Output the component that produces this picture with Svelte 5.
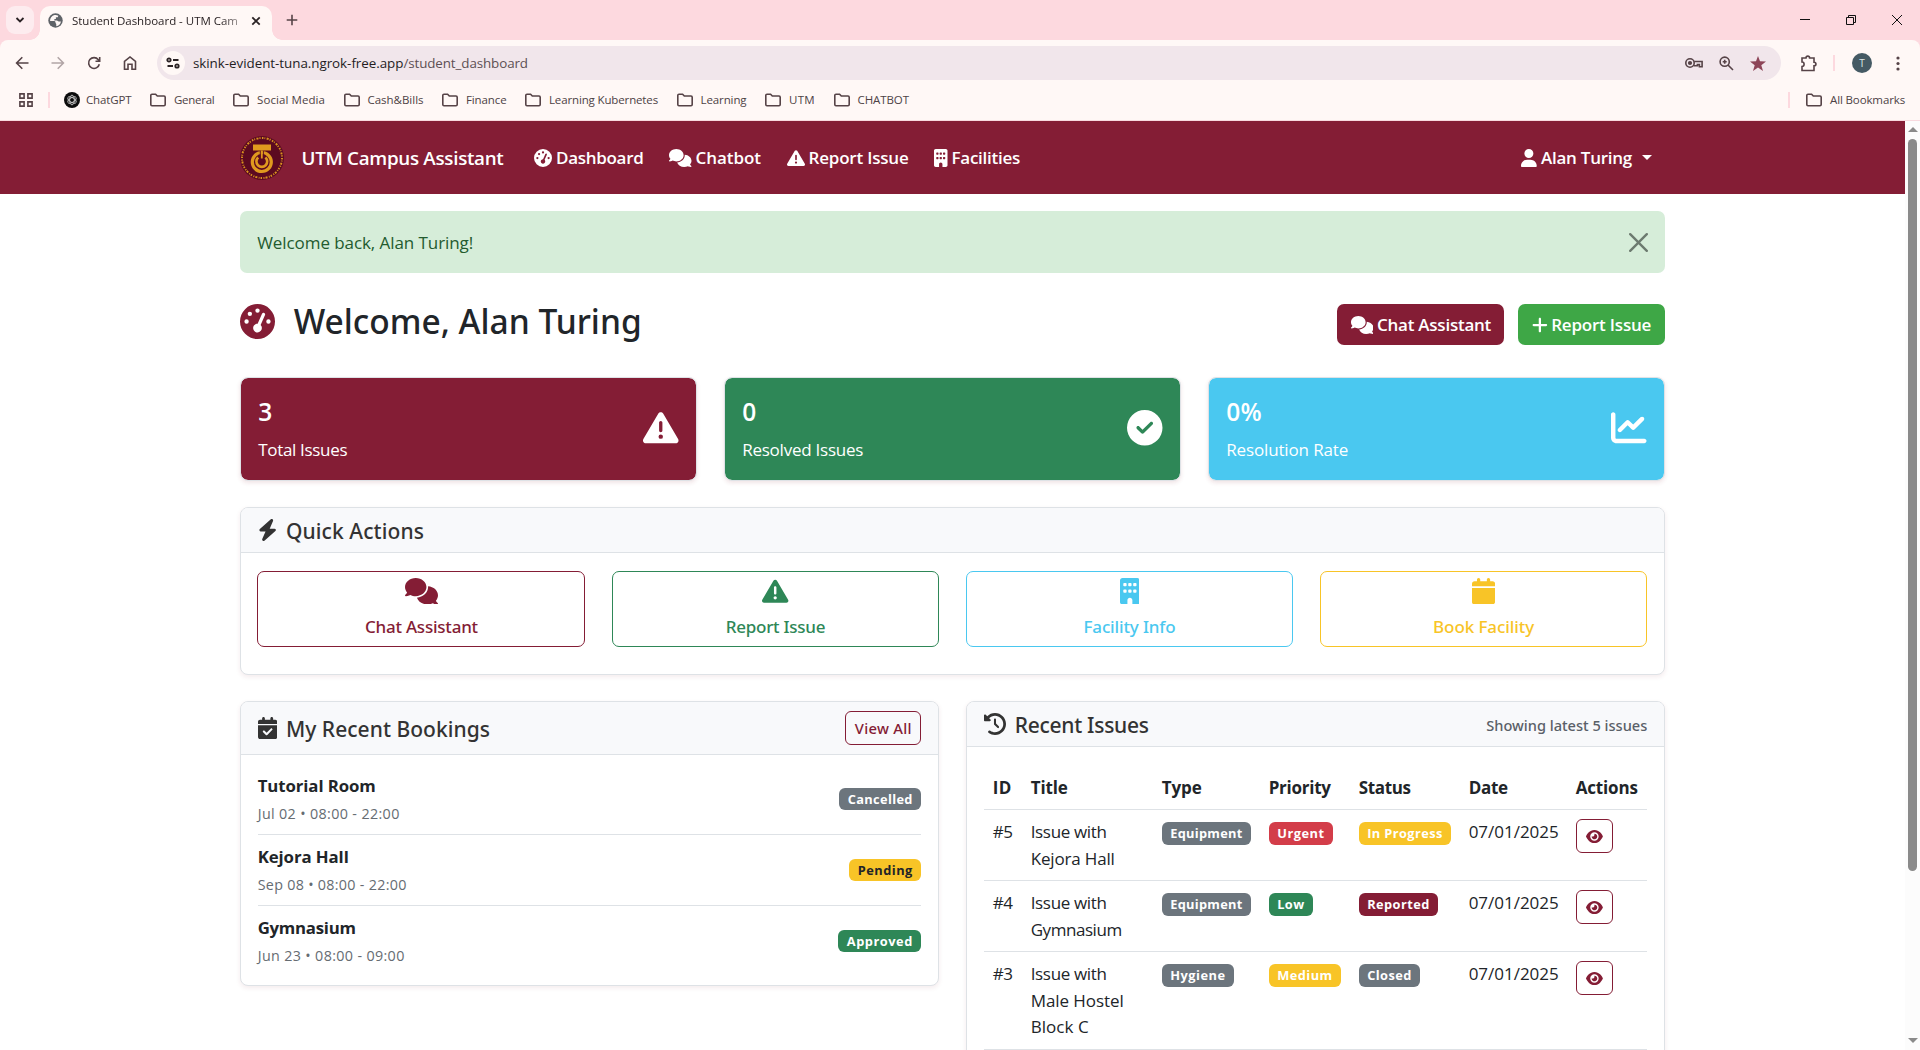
<script>
  const icons = {
    comments: [640, 'M208 352c114.9 0 208-78.8 208-176S322.9 0 208 0S0 78.8 0 176c0 38.6 14.7 74.3 39.6 103.4c-3.5 9.4-8.7 17.7-14.2 24.7c-4.8 6.2-9.7 11-13.3 14.3c-1.8 1.6-3.3 2.9-4.3 3.7c-.5 .4-.9 .7-1.1 .8l-.2 .2C1 327.2-1.4 334.4 .8 340.9S9.1 352 16 352c21.8 0 43.8-5.6 62.1-12.5c9.2-3.5 17.8-7.4 25.2-11.4C134.1 343.3 169.8 352 208 352zM448 176c0 112.3-99.1 196.9-216.5 207C255.8 457.4 336.4 512 432 512c38.2 0 73.9-8.7 104.7-23.9c7.5 4 16 7.9 25.2 11.4c18.3 6.9 40.3 12.5 62.1 12.5c6.9 0 13.1-4.5 15.2-11.1c2.1-6.6-.2-13.8-5.8-17.9l-.2-.2c-.2-.2-.6-.4-1.1-.8c-1-.8-2.5-2-4.3-3.7c-3.6-3.3-8.5-8.1-13.3-14.3c-5.5-7-10.7-15.4-14.2-24.7c24.9-29 39.6-64.7 39.6-103.4c0-92.8-84.9-168.9-192.6-175.5c.4 5.1 .6 10.3 .6 15.5z'],
    warning: [512, 'M256 32c14.2 0 27.3 7.5 34.5 19.8l216 368c7.3 12.4 7.3 27.7 .2 40.1S486.3 480 472 480H40c-14.3 0-27.6-7.7-34.7-20.1s-7-27.8 .2-40.1l216-368C228.7 39.5 241.8 32 256 32zm0 128c-13.3 0-24 10.7-24 24V296c0 13.3 10.7 24 24 24s24-10.7 24-24V184c0-13.3-10.7-24-24-24zm32 224a32 32 0 1 0 -64 0 32 32 0 1 0 64 0z'],
    gauge: [512, 'M0 256a256 256 0 1 1 512 0A256 256 0 1 1 0 256zM288 96a32 32 0 1 0 -64 0 32 32 0 1 0 64 0zM256 416c35.3 0 64-28.7 64-64c0-17.4-6.9-33.1-18.1-44.6L366 161.7c5.3-12.1-.2-26.3-12.3-31.6s-26.3 .2-31.6 12.3L257.9 288c-.6 0-1.3 0-1.9 0c-35.3 0-64 28.7-64 64s28.7 64 64 64zM176 144a32 32 0 1 0 -64 0 32 32 0 1 0 64 0zM96 288a32 32 0 1 0 0-64 32 32 0 1 0 0 64zm352-32a32 32 0 1 0 -64 0 32 32 0 1 0 64 0z'],
    building: [384, 'M48 0C21.5 0 0 21.5 0 48V464c0 26.5 21.5 48 48 48h96V432c0-26.5 21.5-48 48-48s48 21.5 48 48v80h96c26.5 0 48-21.5 48-48V48c0-26.5-21.5-48-48-48H48zM64 240c0-8.8 7.2-16 16-16h32c8.8 0 16 7.2 16 16v32c0 8.8-7.2 16-16 16H80c-8.8 0-16-7.2-16-16V240zm112-16h32c8.8 0 16 7.2 16 16v32c0 8.8-7.2 16-16 16H176c-8.8 0-16-7.2-16-16V240c0-8.8 7.2-16 16-16zm80 16c0-8.8 7.2-16 16-16h32c8.8 0 16 7.2 16 16v32c0 8.8-7.2 16-16 16H272c-8.8 0-16-7.2-16-16V240zM80 96h32c8.8 0 16 7.2 16 16v32c0 8.8-7.2 16-16 16H80c-8.8 0-16-7.2-16-16V112c0-8.8 7.2-16 16-16zm80 16c0-8.8 7.2-16 16-16h32c8.8 0 16 7.2 16 16v32c0 8.8-7.2 16-16 16H176c-8.8 0-16-7.2-16-16V112zM272 96h32c8.8 0 16 7.2 16 16v32c0 8.8-7.2 16-16 16H272c-8.8 0-16-7.2-16-16V112c0-8.8 7.2-16 16-16z'],
    user: [448, 'M224 256A128 128 0 1 0 224 0a128 128 0 1 0 0 256zm-45.7 48C79.8 304 0 383.8 0 482.3C0 498.7 13.3 512 29.7 512H418.3c16.4 0 29.7-13.3 29.7-29.7C448 383.8 368.2 304 269.7 304H178.3z'],
    plus: [448, 'M256 80c0-17.7-14.3-32-32-32s-32 14.3-32 32V224H48c-17.7 0-32 14.3-32 32s14.3 32 32 32H192V432c0 17.7 14.3 32 32 32s32-14.3 32-32V288H400c17.7 0 32-14.3 32-32s-14.3-32-32-32H256V80z'],
    check: [512, 'M256 512A256 256 0 1 0 256 0a256 256 0 1 0 0 512zM369 209L241 337c-9.4 9.4-24.6 9.4-33.9 0l-64-64c-9.4-9.4-9.4-24.6 0-33.9s24.6-9.4 33.9 0l47 47L335 175c9.4-9.4 24.6-9.4 33.9 0s9.4 24.6 0 33.9z'],
    chart: [512, 'M64 64c0-17.7-14.3-32-32-32S0 46.3 0 64V400c0 44.2 35.8 80 80 80H480c17.7 0 32-14.3 32-32s-14.3-32-32-32H80c-8.8 0-16-7.2-16-16V64zm406.6 86.6c12.5-12.5 12.5-32.8 0-45.3s-32.8-12.5-45.3 0L320 210.7l-57.4-57.4c-12.5-12.5-32.8-12.5-45.3 0l-112 112c-12.5 12.5-12.5 32.8 0 45.3s32.8 12.5 45.3 0L240 221.3l57.4 57.4c12.5 12.5 32.8 12.5 45.3 0l128-128z'],
    bolt: [448, 'M349.4 44.6c5.9-13.7 1.5-29.7-10.6-38.5s-28.6-8-39.9 1.8l-256 224c-10 8.8-13.6 22.9-8.9 35.3S50.7 288 64 288H175.5L98.6 467.4c-5.9 13.7-1.5 29.7 10.6 38.5s28.6 8 39.9-1.8l256-224c10-8.8 13.6-22.9 8.9-35.3s-16.6-20.7-30-20.7H272.5L349.4 44.6z'],
    calendar: [448, 'M96 32V64H48C21.5 64 0 85.5 0 112v48H448V112c0-26.5-21.5-48-48-48H352V32c0-17.7-14.3-32-32-32s-32 14.3-32 32V64H160V32c0-17.7-14.3-32-32-32S96 14.3 96 32zM448 192H0V464c0 26.5 21.5 48 48 48H400c26.5 0 48-21.5 48-48V192z'],
    calendarCheck: [448, 'M128 0c17.7 0 32 14.3 32 32V64H288V32c0-17.7 14.3-32 32-32s32 14.3 32 32V64h48c26.5 0 48 21.5 48 48v48H0V112C0 85.5 21.5 64 48 64H96V32c0-17.7 14.3-32 32-32zM0 192H448V464c0 26.5-21.5 48-48 48H48c-26.5 0-48-21.5-48-48V192zM329 305c9.4-9.4 9.4-24.6 0-33.9s-24.6-9.4-33.9 0l-95 95-47-47c-9.4-9.4-24.6-9.4-33.9 0s-9.4 24.6 0 33.9l64 64c9.4 9.4 24.6 9.4 33.9 0L329 305z'],
    history: [512, 'M75 75L41 41C25.9 25.9 0 36.6 0 57.9V168c0 13.3 10.7 24 24 24H134.1c21.4 0 32.1-25.9 17-41l-30.8-30.8C155 85.5 203 64 256 64c106 0 192 86 192 192s-86 192-192 192c-40.8 0-78.6-12.7-109.7-34.4c-14.5-10.1-34.4-6.6-44.6 7.9s-6.6 34.4 7.9 44.6C151.2 495 201.7 512 256 512c141.4 0 256-114.6 256-256S397.4 0 256 0C185.3 0 121.3 28.7 75 75zm181 53c-13.3 0-24 10.7-24 24V256c0 6.4 2.5 12.5 7 17l72 72c9.4 9.4 24.6 9.4 33.9 0s9.4-24.6 0-33.9l-65-65V152c0-13.3-10.7-24-24-24z'],
    eye: [576, 'M288 32c-80.8 0-145.5 36.8-192.6 80.6C48.6 156 17.3 208 2.5 243.7c-3.3 7.9-3.3 16.7 0 24.6C17.3 304 48.6 356 95.4 399.4C142.5 443.2 207.2 480 288 480s145.5-36.8 192.6-80.6c46.8-43.5 78.1-95.4 93-131.1c3.3-7.9 3.3-16.7 0-24.6c-14.9-35.7-46.2-87.7-93-131.1C433.5 68.8 368.8 32 288 32zM144 256a144 144 0 1 1 288 0 144 144 0 1 1 -288 0zm144-64c0 35.3-28.7 64-64 64c-7.1 0-13.9-1.2-20.3-3.3c-5.5-1.8-11.9 1.6-11.7 7.4c.3 6.9 1.3 13.8 3.2 20.7c13.7 51.2 66.4 81.6 117.6 67.9s81.6-66.4 67.9-117.6c-11.1-41.5-47.8-69.4-88.6-71.1c-5.8-.2-9.2 6.1-7.4 11.7c2.1 6.4 3.3 13.2 3.3 20.3z'],
  };

  const bookmarks = [
    ['General', 40.5], ['Social Media', 68], ['Cash&Bills', 56], ['Finance', 40.5],
    ['Learning Kubernetes', 109], ['Learning', 46], ['UTM', 26], ['CHATBOT', 51.5],
  ];
  const nav = [
    ['gauge', 'Dashboard', 87.5], ['comments', 'Chatbot', 65.5],
    ['warning', 'Report Issue', 100], ['building', 'Facilities', 68.5],
  ];
  const stats = [
    { value: '3', vw: 14, label: 'Total Issues', w: 89, icon: 'warning', tone: 'maroon' },
    { value: '0', vw: 14, label: 'Resolved Issues', w: 121, icon: 'check', tone: 'green' },
    { value: '0%', vw: 36, label: 'Resolution Rate', w: 122, icon: 'chart', tone: 'sky' },
  ];
  const actions = [
    { icon: 'comments', label: 'Chat Assistant', w: 113, tone: 'maroon' },
    { icon: 'warning', label: 'Report Issue', w: 99.5, tone: 'green' },
    { icon: 'building', label: 'Facility Info', w: 92, tone: 'sky' },
    { icon: 'calendar', label: 'Book Facility', w: 101, tone: 'amber' },
  ];
  const bookings = [
    { name: 'Tutorial Room', w: 118, when: 'Jul 02 • 08:00 - 22:00', ww: 142, status: 'Cancelled', sw: 65, tone: 'gray' },
    { name: 'Kejora Hall', w: 91, when: 'Sep 08 • 08:00 - 22:00', ww: 149, status: 'Pending', sw: 55, tone: 'amber dark' },
    { name: 'Gymnasium', w: 98, when: 'Jun 23 • 08:00 - 09:00', ww: 147, status: 'Approved', sw: 66, tone: 'green' },
  ];
  const columns = [['ID', 19], ['Title', 37], ['Type', 40], ['Priority', 62], ['Status', 52], ['Date', 39], ['Actions', 62]];
  const issues = [
    { id: '#5', title: [['Issue with', 76], ['Kejora Hall', 84]], type: ['Equipment', 72.5], priority: ['Urgent', 47.5, 'red'], status: ['In Progress', 75.5, 'amber'] },
    { id: '#4', title: [['Issue with', 76], ['Gymnasium', 91]], type: ['Equipment', 72.5], priority: ['Low', 27.5, 'green'], status: ['Reported', 62.5, 'maroon'] },
    { id: '#3', title: [['Issue with', 76], ['Male Hostel', 93], ['Block C', 58]], type: ['Hygiene', 55.5], priority: ['Medium', 55.5, 'amber'], status: ['Closed', 44.5, 'gray'] },
  ];

  // Tracks a label so that it fills the given width in pixels.
  function fit(node, width) {
    const natural = node.getBoundingClientRect().width;
    const n = node.textContent.length;
    node.style.letterSpacing = `${((width - natural) / n).toFixed(3)}px`;
  }
</script>

{#snippet icon(name, size)}
  <svg class="icon" viewBox="0 0 {icons[name][0]} 512" width={(icons[name][0] / 512) * size} height={size}>
    <path d={icons[name][1]} />
  </svg>
{/snippet}

{#snippet folder()}
  <svg class="line" width="16" height="14" viewBox="0 0 16 14">
    <path d="M.8 2.2Q.8 1.200 2 1.200h3.600l1.700 1.800H14q1.200 0 1.200 1.200v7.300q0 1.200-1.200 1.200H2Q.8 12.700 .8 11.500z" />
  </svg>
{/snippet}

{#snippet badge(label, width, tone)}
  <span class="badge {tone}"><span class="t" use:fit={width}>{label}</span></span>
{/snippet}

<div class="window">
  <header class="chrome">
    <div class="tabs">
      <span class="tab-search"><svg class="line dk" width="10" height="8" viewBox="0 0 10 8"><path d="M1.5 2L5 5.5 8.5 2" /></svg></span>
      <div class="tab">
        <svg width="15" height="15" viewBox="0 0 16 16"><circle cx="8" cy="8" r="7.7" fill="#5f6368" /><path d="M7 2.2C4 3 2 5.5 2.2 8.500h4c1.200 0 1.800.6 1.800 1.600s.8 1 .8 2V14c2.600-.3 4.700-2.400 5-5h-2.300c-1 0-1.200-.8-2-1H6.800V6.300h1.600V4.600h2L11 3C9.600 2.100 8.300 2 7 2.200z" fill="#fff8f6" /></svg>
        <span class="tab-title"><span class="t" use:fit={166}>Student Dashboard - UTM Cam</span></span>
        <svg class="line dk" width="10" height="10" viewBox="0 0 10 10"><path d="M1.3 1.3l7.4 7.4M8.7 1.3L1.3 8.7" /></svg>
      </div>
      <svg class="line plus" width="12" height="12" viewBox="0 0 12 12"><path d="M6 .7v10.600M.7 6h10.600" /></svg>
      <div class="controls">
        <svg width="10" height="10" viewBox="0 0 10 10"><path d="M0 4.500h10" /></svg>
        <svg width="10" height="10" viewBox="0 0 10 10"><path d="M.5 2.500h7v7h-7zM2.500 2.500v-2h7v7h-2" /></svg>
        <svg width="10" height="10" viewBox="0 0 10 10"><path d="M0 0l10 10M10 0L0 10" /></svg>
      </div>
    </div>

    <div class="toolbar-wrap">
      <div class="toolbar">
        <div class="nav-buttons">
          <svg class="line" width="14" height="14" viewBox="0 0 14 14"><path d="M13.500 7H2M7.300 1.300L1.600 7l5.700 5.700" /></svg>
          <svg class="line faded" width="14" height="14" viewBox="0 0 14 14"><path d="M.5 7H12M6.700 1.300L12.400 7l-5.700 5.700" /></svg>
          <svg class="line" width="14" height="14" viewBox="0 0 14 14"><path d="M12.300 8.200A5.400 5.400 0 1 1 11.300 3.700L12.500 5M12.700 1v4.200H8.500" /></svg>
          <svg class="line" width="14" height="14" viewBox="0 0 14 14"><path d="M1.500 5.400L7 1l5.500 4.400v7.800H9V8.300H5v4.900H1.500z" /></svg>
        </div>
        <div class="omnibox">
          <span class="site"><svg class="line dk" width="14" height="12" viewBox="0 0 14 12"><circle cx="3" cy="3" r="1.7" /><path d="M7 3h5.500M1.500 9H7" /><circle cx="11" cy="9" r="1.7" /></svg></span>
          <span class="url"><span class="t host" use:fit={210.5}>skink-evident-tuna.ngrok-free.app</span><span class="t" use:fit={124.5}>/student_dashboard</span></span>
          <svg class="line" width="18" height="12" viewBox="0 0 18 12"><circle cx="5" cy="6" r="4.2" /><circle cx="5" cy="6" r="1.3" fill="#564347" /><path d="M9.200 4.500h7.900v5.300h-2.700V7.600h-2v1.200H9" /></svg>
          <svg class="line zoomer" width="15" height="15" viewBox="0 0 15 15"><circle cx="5.7" cy="5.7" r="4.6" /><path d="M9 9l5 5M5.700 3.700v4M3.700 5.700h4" /></svg>
          <svg class="star" width="16" height="15" viewBox="0 0 16 15"><path d="M8 0l2 5.300 6 .2-4.700 3.700L13 15l-5-3.400L3 15l1.700-5.800L0 5.500l6-.2z" /></svg>
        </div>
        <svg class="line puzzle" width="17" height="17" viewBox="0 0 17 17"><path d="M2 3h4c0-2.500 3.600-2.500 3.600 0H14v4.200c2.600 0 2.600 3.700 0 3.700V15.500H2v-4c2.800 0 2.800-4.500 0-4.500z" /></svg>
        <span class="rule"></span>
        <span class="avatar">T</span>
        <svg class="dots" width="4" height="15" viewBox="0 0 4 15"><circle cx="2" cy="2" r="1.6" /><circle cx="2" cy="7.5" r="1.6" /><circle cx="2" cy="13" r="1.6" /></svg>
      </div>
    </div>

    <div class="bookmarks">
      <svg class="line apps" width="14" height="14" viewBox="0 0 14 14"><path d="M.9 .9h4.200v4.200H.9zM8.900 .9h4.200v4.200H8.900zM.9 8.900h4.200v4.200H.9zM8.900 8.900h4.200v4.200H8.900z" /></svg>
      <span class="rule"></span>
      <span class="mark gpt">
        <svg width="16" height="16" viewBox="0 0 16 16"><circle cx="8" cy="8" r="8" fill="#0c0c0c" /><g fill="none" stroke="#d8d8d8" stroke-width=".8"><ellipse cx="8" cy="8" rx="2.3" ry="4.8" /><ellipse cx="8" cy="8" rx="2.3" ry="4.8" transform="rotate(60 8 8)" /><ellipse cx="8" cy="8" rx="2.3" ry="4.8" transform="rotate(120 8 8)" /></g></svg>
        <span class="t" use:fit={45.5}>ChatGPT</span>
      </span>
      {#each bookmarks as [label, w]}
        <span class="mark">{@render folder()}<span class="t" use:fit={w}>{label}</span></span>
      {/each}
      <span class="rule last"></span>
      <span class="mark all">{@render folder()}<span class="t" use:fit={75}>All Bookmarks</span></span>
    </div>
  </header>

  <div class="viewport">
    <div class="page">
      <nav class="navbar">
        <svg class="logo" width="44" height="44" viewBox="0 0 44 44">
          <circle cx="22" cy="22" r="22" fill="#5c0a20" />
          <circle cx="22" cy="22" r="20" fill="none" stroke="#d9921f" stroke-width="1.9" stroke-dasharray="1.500 1.100 .8 1.400 2 1 1.100 1.500" />
          <path d="M13 8.500h18v6H13z" fill="#e09a1e" />
          <circle cx="21.8" cy="26" r="9.500" fill="none" stroke="#e09a1e" stroke-width="3.2" />
          <path d="M18.200 21.500a5.400 5.400 0 1 0 7.200 0" fill="none" stroke="#e09a1e" stroke-width="2.6" />
          <path d="M20.300 15v6.500M23.300 15v6.500" stroke="#5c0a20" stroke-width="1" />
          <path d="M21.800 14.500v8" stroke="#e09a1e" stroke-width="1.800" />
        </svg>
        <span class="brand"><span class="t" use:fit={202}>UTM Campus Assistant</span></span>
        {#each nav as [ic, label, w]}
          <span class="nav-link">{@render icon(ic, 18)}<span class="t" use:fit={w}>{label}</span></span>
        {/each}
        <span class="nav-link account">{@render icon('user', 18)}<span class="t" use:fit={91}>Alan Turing</span><i class="caret"></i></span>
      </nav>

      <main>
        <div class="alert">
          <span class="t" use:fit={216}>Welcome back, Alan Turing!</span>
          <svg width="19" height="19" viewBox="0 0 16 16"><path d="M.293.293a1 1 0 0 1 1.414 0L8 6.586 14.293.293a1 1 0 1 1 1.414 1.414L9.414 8l6.293 6.293a1 1 0 0 1-1.414 1.414L8 9.414l-6.293 6.293a1 1 0 0 1-1.414-1.414L6.586 8 .293 1.707a1 1 0 0 1 0-1.414z" /></svg>
        </div>

        <div class="heading">
          <h1>{@render icon('gauge', 35)}<span class="t" use:fit={348}>Welcome, Alan Turing</span></h1>
          <button class="btn maroon">{@render icon('comments', 18)}<span class="t" use:fit={114}>Chat Assistant</span></button>
          <button class="btn lime">{@render icon('plus', 18)}<span class="t" use:fit={100}>Report Issue</span></button>
        </div>

        <section class="stats">
          {#each stats as s}
            <div class="stat {s.tone}">
              <div>
                <strong><span class="t" use:fit={s.vw}>{s.value}</span></strong>
                <p><span class="t" use:fit={s.w}>{s.label}</span></p>
              </div>
              {@render icon(s.icon, 35.5)}
            </div>
          {/each}
        </section>

        <section class="card quick">
          <div class="card-head"><h2>{@render icon('bolt', 22)}<span class="t" use:fit={138}>Quick Actions</span></h2></div>
          <div class="actions">
            {#each actions as a}
              <button class="action on-{a.tone}">{@render icon(a.icon, 26.4)}<span class="t" use:fit={a.w}>{a.label}</span></button>
            {/each}
          </div>
        </section>

        <div class="columns">
          <section class="card bookings">
            <div class="card-head tall">
              <h2>{@render icon('calendarCheck', 22)}<span class="t" use:fit={204}>My Recent Bookings</span></h2>
              <button class="view-all"><span class="t" use:fit={57}>View All</span></button>
            </div>
            <div class="booking-list">
              {#each bookings as b}
                <div class="booking">
                  <div>
                    <h3><span class="t" use:fit={b.w}>{b.name}</span></h3>
                    <small><span class="t" use:fit={b.ww}>{b.when}</span></small>
                  </div>
                  {@render badge(b.status, b.sw, b.tone)}
                </div>
              {/each}
            </div>
          </section>

          <section class="card">
            <div class="card-head">
              <h2>{@render icon('history', 22)}<span class="t" use:fit={134}>Recent Issues</span></h2>
              <span class="note"><span class="t" use:fit={161}>Showing latest 5 issues</span></span>
            </div>
            <div class="table">
              <div class="row head">
                {#each columns as [label, w]}<span><span class="t" use:fit={w}>{label}</span></span>{/each}
              </div>
              {#each issues as r}
                <div class="row">
                  <span><span class="t" use:fit={20}>{r.id}</span></span>
                  <span>{#each r.title as [line, w]}<span class="title-line"><span class="t" use:fit={w}>{line}</span></span>{/each}</span>
                  <span class="bcell">{@render badge(r.type[0], r.type[1], 'gray')}</span>
                  <span class="bcell">{@render badge(r.priority[0], r.priority[1], r.priority[2])}</span>
                  <span class="bcell">{@render badge(r.status[0], r.status[1], r.status[2])}</span>
                  <span><span class="t" use:fit={90}>07/01/2025</span></span>
                  <span><button class="view" aria-label="View issue">{@render icon('eye', 15)}</button></span>
                </div>
              {/each}
            </div>
          </section>
        </div>
      </main>
    </div>
    <div class="scrollbar"><i class="up"></i><i class="thumb"></i><i class="down"></i></div>
  </div>
</div>

<style>
  :global(body) { background: #fff; }
  * { box-sizing: border-box; }
  .window { width: 1920px; height: 1050px; overflow: hidden; display: flex; flex-direction: column; font-family: "Open Sans", "Noto Sans", sans-serif; color: #212529; font-size: 17px; }
  h1, h2, h3, p { margin: 0; font-weight: 600; }
  button { font: inherit; cursor: pointer; padding: 0; }
  svg { display: block; flex: none; }
  .icon { fill: currentColor; }
  .t { display: inline-block; white-space: pre; }
  .maroon { background: #841d35; }
  .green { background: #2e8757; }
  .lime { background: #3ea746; }
  .sky { background: #4ac8f0; }
  .amber { background: #f8c427; }
  .gray { background: #6c757d; }
  .red { background: #d33d49; }

  /* Browser chrome */
  .chrome { flex: none; height: 121px; background: #fff8f6; border-bottom: 1px solid #f8dadf; font-size: 11.5px; color: #4d4245; }
  .line { fill: none; stroke: #564347; stroke-width: 1.6; }
  .dk { stroke: #2a2224; stroke-width: 1.8; }
  .faded { opacity: .45; }
  .tabs { height: 40px; background: #fdd9df; display: flex; align-items: flex-start; padding: 6px 0 0 6px; }
  .tab-search { width: 28px; height: 28px; border-radius: 9px; background: #fdecef; display: grid; place-items: center; margin-right: 6px; }
  .tab { position: relative; width: 232px; height: 34px; background: #fff8f6; border-radius: 10px 10px 0 0; display: flex; align-items: center; padding: 0 11px 5px 8px; color: #241d1f; }
  .tab::before, .tab::after { content: ""; position: absolute; bottom: 0; width: 10px; height: 10px; }
  .tab::before { left: -10px; background: radial-gradient(circle at 0 0, transparent 9.5px, #fff8f6 10px); }
  .tab::after { right: -10px; background: radial-gradient(circle at 100% 0, transparent 9.5px, #fff8f6 10px); }
  .tab-title { width: 170px; margin: 0 10px 0 9px; -webkit-mask-image: linear-gradient(90deg, #000 88%, transparent 108%); mask-image: linear-gradient(90deg, #000 88%, transparent 108%); }
  .plus { margin: 8px 0 0 14px; }
  .controls { margin-left: auto; display: flex; gap: 36px; padding: 9px 18px 0 0; }
  .controls path { fill: none; stroke: #111; stroke-width: 1; }
  .toolbar-wrap { background: #fdd9df; }
  .toolbar { height: 46px; display: flex; align-items: center; padding: 0 20px 0 15px; border-radius: 8px 8px 0 0; background: #fff8f6; }
  .nav-buttons { display: flex; gap: 22px; width: 142px; }
  .omnibox { width: 1625px; height: 34px; border-radius: 17px; background: #f1e6eb; display: flex; align-items: center; padding: 0 15px 0 4px; }
  .site { width: 24px; height: 24px; border-radius: 50%; background: #fff8f6; display: grid; place-items: center; }
  .url { margin: 0 auto 0 8px; font-size: 13.4px; color: #5d5054; }
  .host { color: #241d1f; }
  .zoomer { margin: 0 16px; }
  .star { fill: #8d4558; }
  .puzzle { margin-left: 19px; }
  .rule { flex: none; width: 2px; height: 16px; background: #fdd9df; }
  .toolbar .rule { margin: 0 17px 0 16px; }
  .avatar { width: 20px; height: 20px; border-radius: 50%; background: #455a64; color: #dfe6e9; font-size: 10px; line-height: 20px; text-align: center; }
  .dots { margin-left: 24px; fill: #564347; }
  .bookmarks { height: 28px; display: flex; align-items: center; padding: 0 15px 0 19px; }
  .bookmarks .t { margin-top: -1px; }
  .bookmarks .rule { margin-left: 15px; }
  .bookmarks .last { margin-left: auto; }
  .mark { display: flex; align-items: center; gap: 8px; margin-left: 18.5px; }
  .mark.gpt { gap: 6px; margin-left: 14px; }
  .mark.all { margin-left: 16px; }

  /* Page shell */
  .viewport { flex: 1; min-height: 0; display: flex; }
  .page { flex: 1; overflow: hidden; }
  .scrollbar { width: 15px; background: #fcfcfc; display: flex; flex-direction: column; align-items: center; padding: 6px 0 7px; }
  .up, .down { border: 5px solid transparent; border-top: 0; border-bottom-color: #8a8a8a; }
  .down { border-bottom: 0; border-top: 5px solid #8a8a8a; margin-top: auto; }
  .thumb { width: 9px; height: 732px; margin-top: 7px; border-radius: 5px; background: #8a8a8a; }
  .navbar { height: 73px; background: #841d35; color: #fff; display: flex; align-items: center; padding: 0 253px 0 240px; font-weight: 600; }
  .brand { font-size: 18.8px; margin: 0 5px 0 17.5px; }
  .nav-link { display: flex; align-items: center; gap: 4px; margin-left: 25.5px; }
  .account { margin-left: auto; }
  .caret { border: 5px solid transparent; border-top-color: #fff; border-bottom: 0; margin-left: 6px; }

  main { width: 1425.6px; margin-left: 239.7px; padding-top: 17px; }
  .alert { height: 62px; border-radius: 7px; background: #d6edd9; color: #235b2f; display: flex; align-items: center; justify-content: space-between; padding: 0 17px 0 17.5px; }
  .alert svg { fill: #6c7a6f; }
  .heading { height: 45px; margin: 27px 0 32px; display: flex; align-items: flex-end; gap: 14px; }
  h1 { margin-right: auto; align-self: flex-start; height: 42px; display: flex; align-items: center; gap: 19px; font-family: "Noto Sans", "Open Sans", sans-serif; font-size: 33.5px; line-height: 42px; font-weight: 500; }
  h1 .icon { color: #841d35; }
  .btn { height: 41px; border: 0; border-radius: 7px; color: #fff; font-weight: 600; display: flex; align-items: center; justify-content: center; gap: 4px; }
  .btn.maroon { width: 167px; }
  .btn.lime { width: 147px; gap: 3px; }

  .stats { display: grid; grid-template-columns: repeat(3, 1fr); gap: 26.4px; }
  .stat { height: 104px; border: 1px solid #dee2e6; border-radius: 8px; box-shadow: 0 2px 4px rgba(132, 29, 53, .12); color: #fff; display: flex; align-items: center; justify-content: space-between; padding: 0 17.5px; background-clip: padding-box; }
  .stat .icon { margin-bottom: 2px; }
  .stat strong { display: block; font-size: 24.5px; line-height: 30px; margin-top: 1px; font-weight: 600; }
  .stat p { font-weight: 400; line-height: 26px; margin-top: 10px; }

  .card { border: 1px solid #dee2e6; border-radius: 8px; background: #fff; box-shadow: 0 2px 5px rgba(132, 29, 53, .09); overflow: hidden; }
  .card-head { height: 45px; background: #f8f9fb; border-bottom: 1px solid #dee2e6; display: flex; align-items: center; justify-content: space-between; padding: 0 17px; color: #333; }
  .card-head.tall { height: 53px; }
  h2 { font-family: "Noto Sans", "Open Sans", sans-serif; font-size: 21px; font-weight: 500; display: flex; align-items: center; gap: 9px; }
  h2 .t { padding-top: 2px; }
  .quick { margin-top: 26px; height: 168px; }
  .actions { display: grid; grid-template-columns: repeat(4, 1fr); gap: 26.2px; padding: 18px 16.8px 0; }
  .action { height: 76px; border: 1px solid currentColor; border-radius: 7px; background: none; display: flex; flex-direction: column; align-items: center; gap: 10px; padding-top: 6px; font-family: "Noto Sans", "Open Sans", sans-serif; font-weight: 500; line-height: 26px; }
  .on-maroon { color: #841d35; }
  .on-green { color: #2e8757; }
  .on-sky { color: #4ac8f0; }
  .on-amber { color: #f8c427; }

  .columns { margin-top: 26px; display: grid; grid-template-columns: 1fr 1fr; gap: 26.4px; align-items: start; }
  .view-all { width: 76px; height: 34px; border: 1px solid #841d35; border-radius: 6px; background: none; color: #841d35; font-family: "Noto Sans", "Open Sans", sans-serif; font-size: 14.8px; font-weight: 500; }
  .booking-list { padding: 9px 17px 8px; }
  .booking { height: 71px; border-bottom: 1px solid #dee2e6; display: flex; justify-content: space-between; align-items: center; }
  .booking:last-child { border-bottom-color: transparent; }
  h3 { font-size: 16.8px; line-height: 26px; font-weight: 700; margin-top: -1px; }
  small { display: block; margin-top: 4px; font-size: 14.3px; line-height: 21px; color: #666c72; }
  .badge { height: 22.5px; border-radius: 6px; padding: 0 8.5px; display: inline-flex; align-items: center; color: #fff; font-size: 12.8px; font-weight: 700; }
  .dark { color: #212529; }
  .note { font-family: "Noto Sans", "Open Sans", sans-serif; font-size: 14.6px; font-weight: 500; color: #5a6068; padding-top: 1px; }

  .table { padding: 18px 17px 26px; }
  .row { display: grid; grid-template-columns: 38px 131px 107px 90px 110px 107px 1fr; padding: 9px 0 8px 9px; border-bottom: 1px solid #dee2e6; line-height: 26.4px; min-height: 71px; }
  .head { min-height: 45px; padding-top: 10px; font-weight: 700; }
  .title-line { display: block; }
  .bcell { padding-top: 3px; line-height: 1; }
  .view { display: grid; place-items: center; width: 37px; height: 34px; border: 1px solid #841d35; border-radius: 6px; background: none; color: #841d35; }
</style>
